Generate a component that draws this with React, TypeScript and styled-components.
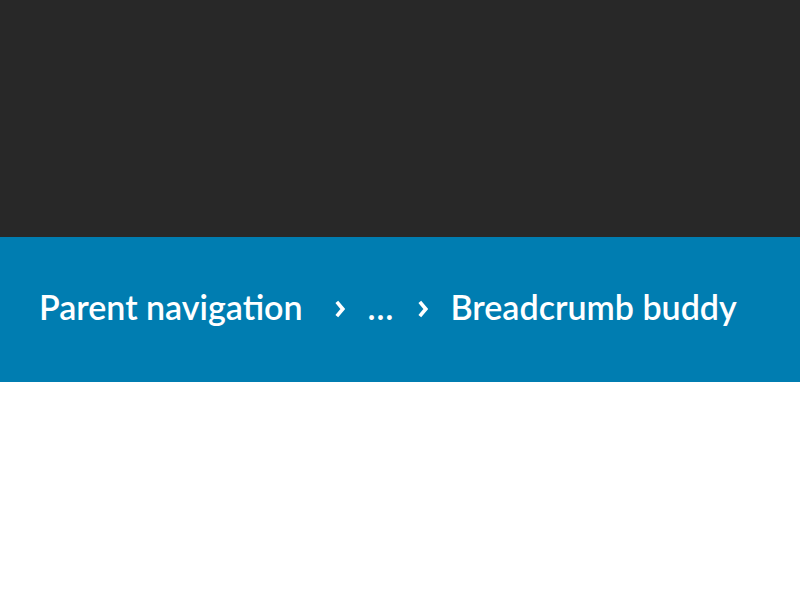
import React from "react";
import styled, { createGlobalStyle } from "styled-components";

const Global = createGlobalStyle`
  html, body { margin: 0; padding: 0; background: #ffffff; }
  body { font-family: Lato, "Open Sans", sans-serif; }
`;

const Page = styled.div`
  display: flex;
  flex-direction: column;
  width: 800px;
  height: 600px;
`;

const Header = styled.div`
  height: 237px;
  background: #282828;
`;

const Bar = styled.nav`
  height: 145px;
  background: #007db1;
  display: flex;
  align-items: center;
  padding: 0 39px 6px;
  box-sizing: border-box;
`;

const List = styled.ol`
  list-style: none;
  margin: 0;
  padding: 0;
  display: flex;
  align-items: center;
  color: #ffffff;
  font-family: Lato, sans-serif;
  font-weight: 600;
  font-size: 34px;
  line-height: 1;
`;

const Crumb = styled.li<{ $first?: boolean }>`
  display: flex;
  align-items: center;
  white-space: nowrap;
  padding-right: ${(p) => (p.$first ? 8 : 0)}px;
`;

const Sep = styled.svg`
  width: 10px;
  height: 18px;
  margin: 4px 23px 0 24px;
  flex: none;
`;

const Chevron = () => (
  <Sep viewBox="0 0 10 18" aria-hidden="true">
    <polyline
      points="1.8,1.8 7.8,9 1.8,16.2"
      fill="none"
      stroke="#ffffff"
      strokeWidth="3.6"
      strokeLinecap="butt"
      strokeLinejoin="miter"
    />
  </Sep>
);

export default function App() {
  return (
    <Page>
      <Global />
      <Header />
      <Bar aria-label="breadcrumb">
        <List>
          <Crumb $first>Parent navigation</Crumb>
          <Crumb>
            <Chevron />…
          </Crumb>
          <Crumb>
            <Chevron />Breadcrumb buddy
          </Crumb>
        </List>
      </Bar>
    </Page>
  );
}
